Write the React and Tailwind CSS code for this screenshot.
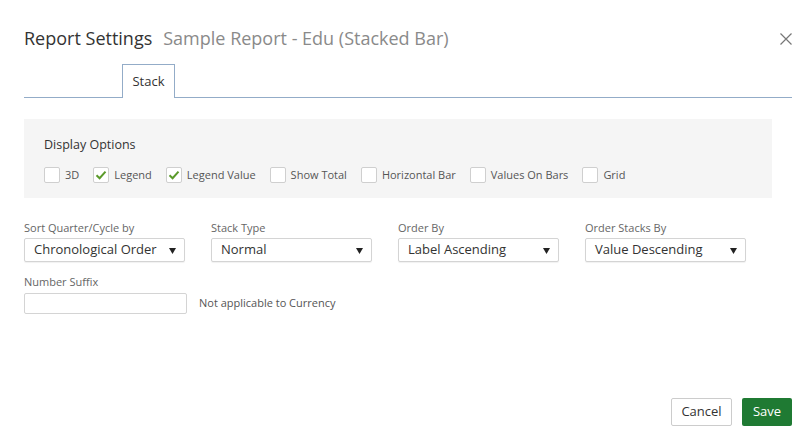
import { useState } from "react";

const options = [
  { label: "3D", checked: false },
  { label: "Legend", checked: true },
  { label: "Legend Value", checked: true },
  { label: "Show Total", checked: false },
  { label: "Horizontal Bar", checked: false },
  { label: "Values On Bars", checked: false },
  { label: "Grid", checked: false },
];

const selects = [
  { label: "Sort Quarter/Cycle by", value: "Chronological Order" },
  { label: "Stack Type", value: "Normal" },
  { label: "Order By", value: "Label Ascending" },
  { label: "Order Stacks By", value: "Value Descending" },
];

const Checkbox = ({ label, checked, onToggle }) => (
  <label className="flex items-center gap-[5px] cursor-pointer" onClick={onToggle}>
    <span className="w-4 h-4 rounded-[2px] border border-[#cfcfcf] bg-white flex items-center justify-center">
      {checked && (
        <svg width="12" height="10" viewBox="0 0 12 10">
          <path d="M1.5 5.2 L4.6 8.2 L10.5 1.6" fill="none" stroke="#5b9a2a" strokeWidth="2" />
        </svg>
      )}
    </span>
    <span className="text-[11px] text-[#555]">{label}</span>
  </label>
);

const Select = ({ label, value }) => (
  <div className="flex flex-col w-[161px]">
    <span className="text-[11px] leading-4 text-[#666] mb-[2px]">{label}</span>
    <div className="h-6 border border-[#d4d4d4] rounded-[2px] bg-white shadow-[0_1px_1px_rgba(0,0,0,0.06)] flex items-center justify-between pl-[9px] pr-[8px]">
      <span className="text-[13px] text-[#333]">{value}</span>
      <svg width="7" height="7" viewBox="0 0 7 7">
        <polygon points="0,1 7,1 3.5,7" fill="#222" />
      </svg>
    </div>
  </div>
);

const App = () => {
  const [checks, setChecks] = useState(options.map((o) => o.checked));

  const toggle = (i) => {
    setChecks(checks.map((c, j) => (j === i ? !c : c)));
  };

  return (
    <div className="w-[806px] h-[443px] bg-white flex flex-col pl-6 pr-[14px] font-['Open_Sans',sans-serif]">
      <div className="h-16 pt-3 flex items-center justify-between">
        <div className="flex items-baseline gap-[11px] text-[18px]">
          <span className="text-[#333]">Report Settings</span>
          <span className="text-[#8a8a8a]">Sample Report - Edu (Stacked Bar)</span>
        </div>
        <button className="w-3 h-3 mt-[1px]">
          <svg width="12" height="12" viewBox="0 0 12 12">
            <path d="M0.5 0.5 L11.5 11.5 M11.5 0.5 L0.5 11.5" stroke="#777" strokeWidth="1.2" />
          </svg>
        </button>
      </div>

      <div className="h-[34px] border-b border-[#93acc8] flex items-end">
        <div className="ml-[98px] w-[53px] h-[34px] -mb-px border border-b-0 border-[#93acc8] bg-white flex items-center justify-center text-[13px] text-[#333]">
          Stack
        </div>
      </div>

      <div className="mt-[21px] mr-5 h-[79px] bg-[#f5f5f5] px-5 pt-[17px]">
        <div className="text-[12.5px] leading-[18px] text-[#333] font-medium">Display Options</div>
        <div className="mt-[13px] flex items-center gap-[14px]">
          {options.map((o, i) => (
            <Checkbox key={o.label} label={o.label} checked={checks[i]} onToggle={() => toggle(i)} />
          ))}
        </div>
      </div>

      <div className="mt-[22px] flex gap-[26px]">
        {selects.map((s) => (
          <Select key={s.label} label={s.label} value={s.value} />
        ))}
      </div>

      <div className="mt-3 flex flex-col">
        <span className="text-[11px] leading-4 text-[#666] mb-[3px]">Number Suffix</span>
        <div className="flex items-center gap-3">
          <input className="w-[163px] h-[21px] border border-[#d4d4d4] rounded-[2px] outline-none px-2 text-[13px]" />
          <span className="text-[11px] text-[#555]">Not applicable to Currency</span>
        </div>
      </div>

      <div className="mt-auto pb-[17px] flex justify-end gap-[10px]">
        <button className="w-[61px] h-7 border border-[#ccc] rounded-[2px] bg-white text-[13px] text-[#333]">
          Cancel
        </button>
        <button className="w-[50px] h-7 rounded-[2px] bg-[#1f7a33] text-[13px] text-white">
          Save
        </button>
      </div>
    </div>
  );
};

export default App;
